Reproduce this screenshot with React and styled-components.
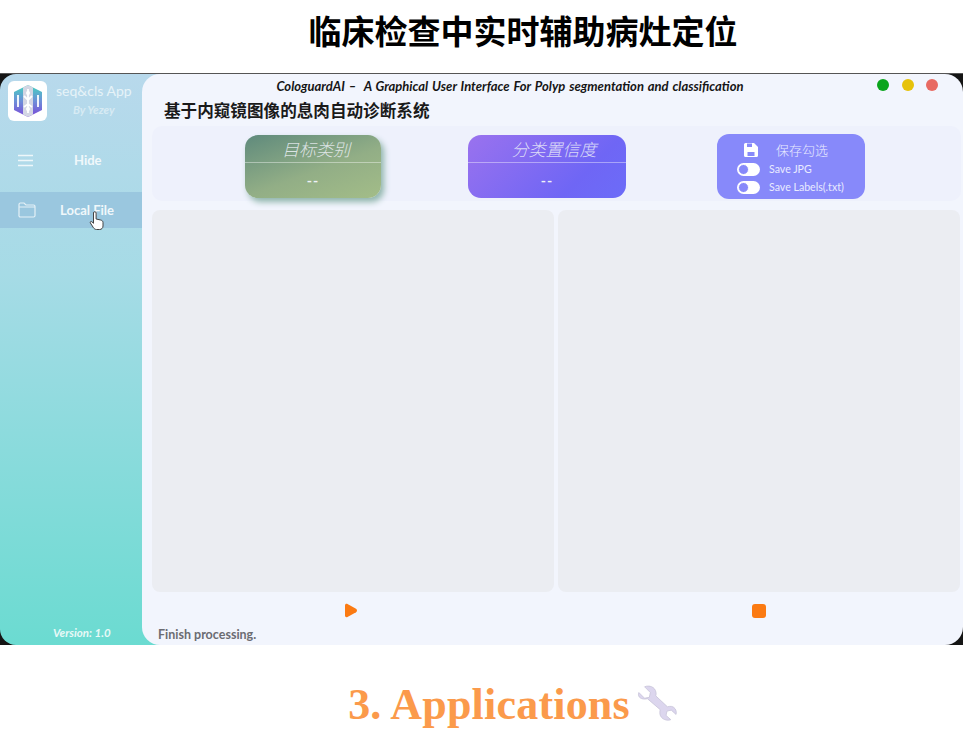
import React from 'react';
import styled, { createGlobalStyle } from 'styled-components';

const Global = createGlobalStyle`
  html, body { margin: 0; padding: 0; background: #fff; }
  body { width: 963px; height: 754px; overflow: hidden; font-family: "Lato", "Noto Sans CJK SC", sans-serif; }
`;
const Page = styled.div`display: flex; flex-direction: column; width: 963px; height: 754px;`;
const Heading = styled.h1`
  margin: 0; height: 73px; box-sizing: border-box; padding: 9px 0 0 83px; text-align: center;
  font: 700 33px/42px "Noto Sans CJK SC", sans-serif; color: #000;
`;
const Win = styled.div`
  display: flex; height: 572px; background: #151515; border-top: 1px solid #555; box-sizing: border-box;
`;
const Side = styled.aside`
  width: 162px; margin-right: -20px; padding-right: 20px; box-sizing: border-box; flex: none;
  display: flex; flex-direction: column; border-radius: 16px 0 0 16px;
  background: linear-gradient(180deg, #b8d9ec 0%, #a6dbe6 35%, #6bdbd1 100%);
`;
const Brand = styled.div`display: flex; padding: 7px 0 0 8px; height: 68px; box-sizing: border-box;`;
const LogoBox = styled.div`
  width: 39px; height: 40px; border-radius: 6px; background: #fff; display: flex; align-items: center; justify-content: center;
`;
const BrandText = styled.div`
  display: flex; flex-direction: column; align-items: center; margin-left: 9px; color: #e6f3f8;
`;
const AppName = styled.div`font-size: 14px; line-height: 19px;`;
const By = styled.div`font-size: 11.5px; line-height: 20px; font-style: italic; font-weight: 700; opacity: .7;`;
const NavItem = styled.div`
  display: flex; align-items: center; height: 36px; position: relative; color: #f0f8fb;
  font-size: 13px; font-weight: 700; box-sizing: border-box; padding-left: ${p => p.$pad}px;
  background: ${p => p.$active ? '#9ac7df' : 'transparent'};
  margin-bottom: 14px;
`;
const NavLabel = styled.span`margin-left: ${p => p.$gap}px;`;
const Cursor = styled.svg`position: absolute; left: 89px; top: 19px;`;
const Version = styled.div`
  margin-top: auto; padding: 0 0 5px 53px; font-size: 11.5px; line-height: 14px; font-weight: 700; font-style: italic; color: #e8f9f7;
`;
const Main = styled.main`
  flex: 1; min-width: 0; position: relative; border-radius: 18px; background: #f2f5fd;
  display: flex; flex-direction: column; padding: 0 2px 0 10px;
`;
const Bar = styled.div`
  height: 26px; box-sizing: border-box; position: relative; display: flex; align-items: center; justify-content: center; padding: 0 93px 2px 0;
  font-size: 13px; font-weight: 700; font-style: italic; color: #161616; word-spacing: 1px;
`;
const Lights = styled.div`position: absolute; right: 23px; top: 5px; display: flex; gap: 12.5px;`;
const Light = styled.span`width: 12px; height: 12px; border-radius: 50%; background: ${p => p.$c};`;
const Sub = styled.div`
  height: 26px; padding-left: 12px; font: 700 16.6px/20px "Noto Sans CJK SC", sans-serif; color: #1a1a1a;
`;
const Cards = styled.section`
  height: 75px; border-radius: 10px; background: #eef1fc; display: grid;
  grid-template-columns: 93px 136px 87px 158px 91px 148px 1fr; align-items: start; padding-top: 9px; box-sizing: border-box;
`;
const Card = styled.div`
  grid-column: ${p => p.$col}; height: ${p => p.$h}px; border-radius: 13px; color: #eef1f8;
  background: ${p => p.$bg}; box-shadow: ${p => p.$shadow || 'none'};
  display: flex; flex-direction: column; align-items: center;
`;
const CardTitle = styled.div`
  align-self: stretch; height: 27px; border-bottom: 1px solid rgba(255,255,255,.4); text-align: center; text-indent: ${p => p.$indent}px;
  font: italic 300 17px/28px "Noto Sans CJK SC", serif; color: rgba(238,241,248,.85);
`;
const CardValue = styled.div`font-size: 14px; font-weight: 700; line-height: 35px; letter-spacing: 1px;`;
const SaveCard = styled.div`
  grid-column: 6; height: 65px; width: 148px; border-radius: 12px; background: #8789fa; color: #e9ebff;
  display: flex; flex-direction: column; padding: 6px 0 0 20px; box-sizing: border-box; margin-top: -1px;
`;
const SaveHead = styled.div`display: flex; align-items: center; gap: 17px; padding-left: 6px; height: 20px; font: 300 13px/20px "Noto Sans CJK SC", serif;`;
const SaveRow = styled.div`display: flex; align-items: center; gap: 9px; height: 18px; font-size: 10.6px;`;
const Toggle = styled.span`
  width: 23px; height: 13px; border-radius: 7px; background: #fff; position: relative; display: block;
`;
const Knob = styled.span`
  position: absolute; left: 1px; top: 1px; width: 11px; height: 11px; border-radius: 50%; background: #8789fa; border: 1px solid #fff; box-sizing: border-box;
`;
const Panes = styled.section`
  display: grid; grid-template-columns: 402px 402px; gap: 4px; margin-top: 9px; height: 382px;
`;
const Pane = styled.div`background: #ebedf2; border-radius: 8px;`;
const Controls = styled.div`
  display: flex; gap: 394px; height: 38px; padding: 0 0 1px 192px; box-sizing: border-box; align-items: center;
`;
const Status = styled.div`font-size: 12.5px; font-weight: 700; color: #6b6c72; line-height: 14px; padding: 0 0 0 6px; margin-top: -2px;`;
const Foot = styled.div`
  flex: 1; display: flex; align-items: flex-start; justify-content: center; gap: 6px; padding: 37px 0 0 62px;
`;
const FootTitle = styled.h2`
  margin: 0; font: 700 44px/46px "Liberation Serif", serif; letter-spacing: .2px; color: #fb9a4b;
`;

const Logo = () => (
  <svg width="32" height="34" viewBox="0 0 32 34" fill="none">
    <defs>
      <linearGradient id="lg" x1="0" y1="0" x2="0" y2="1">
        <stop offset="0" stopColor="#45d3bf" />
        <stop offset=".5" stopColor="#6d8fd8" />
        <stop offset="1" stopColor="#7a48d8" />
      </linearGradient>
    </defs>
    <path d="M16 1 30 8v18l-14 7-14-7V8z" fill="url(#lg)" />
    <path d="M11 3.500 16 1l5 2.500v27L16 33l-5-2.500z" fill="#d3d6e4" />
    <path d="M16 5v24M12 12l4 4 4-4M12 23l4-3 4 3M6 11v12M26 11v12" stroke="#fff" strokeWidth="1.800" />
    <circle cx="16" cy="9" r="2" fill="#fff" /><circle cx="16" cy="25" r="2" fill="#fff" />
  </svg>
);
const Menu = () => (
  <svg width="15" height="13" viewBox="0 0 15 13"><path d="M0 1.500h15M0 6.500h15M0 11.500h15" stroke="#eef7fa" strokeWidth="1.600" /></svg>
);
const Folder = () => (
  <svg width="18" height="16" viewBox="0 0 18 16" fill="none" stroke="#e4f1f7" strokeWidth="1.200">
    <path d="M1 13V2.500A1.500 1.500 0 0 1 2.500 1h3.500l2 2h7.500A1.500 1.500 0 0 1 17 4.500v9a1.500 1.500 0 0 1-1.500 1.500h-13A1.500 1.500 0 0 1 1 13zM1 5h16" />
  </svg>
);
const Hand = () => (
  <Cursor width="16" height="20" viewBox="0 0 16 20">
    <path d="M4.500 2a1.300 1.300 0 0 1 2.600 0v6l4.500 1c1.600.4 2.400 1.200 2.400 2.600V15c0 2-1.400 3.500-3.400 3.500H7.500c-1.300 0-2.200-.6-3-1.700L1.400 12c-.6-1 .5-2 1.500-1.200l1.600 1.500z" fill="#fff" stroke="#444" strokeWidth="1" />
  </Cursor>
);
const Disk = () => (
  <svg width="16" height="16" viewBox="0 0 16 16"><path d="M1 2.500A1.500 1.500 0 0 1 2.500 1h8.500L15 5v8.500a1.500 1.500 0 0 1-1.500 1.500h-11A1.500 1.500 0 0 1 1 13.500z" fill="#fff" /><path d="M4 1.500h5V5H4zM4.500 10h7v4h-7z" fill="#8789fa" /></svg>
);
const Play = () => (
  <svg width="14" height="15" viewBox="0 0 14 15"><path d="M1 2.500c0-1.500 1.300-2 2.500-1.400l8.500 4.700c1.300.8 1.300 2.600 0 3.400l-8.500 4.700C2.300 14.500 1 14 1 12.500z" fill="#fb7a12" /></svg>
);
const Stop = () => (
  <svg width="14" height="14" viewBox="0 0 14 14"><rect width="14" height="14" rx="3" fill="#fb7a12" /></svg>
);
const Wrench = () => (
  <svg width="41" height="40" viewBox="0 0 43 40" style={{ marginTop: 1 }}>
    <path d="M3 9 9 15l5-1 1-5-6-6c5-2 11 0 12 6 .3 1.500 0 2.500-.3 3.500L33 24c3-1 6-.7 8 2 1.300 2 1.500 4 1 6l-5-4.500-4.500 1-1 4.500 5 4.500c-6 2-12-2-11.500-8 0-1 .2-1.700.4-2.500L12 15.500C6 17 1 14 3 9z" fill="#dcd6ee" stroke="#c6c2d8" strokeWidth=".8" />
  </svg>
);

export default function App() {
  return (
    <Page>
      <Global />
      <Heading>临床检查中实时辅助病灶定位</Heading>
      <Win>
        <Side>
          <Brand>
            <LogoBox><Logo /></LogoBox>
            <BrandText>
              <AppName>seq&amp;cls App</AppName>
              <By>By Yezey</By>
            </BrandText>
          </Brand>
          <NavItem $pad={18}><Menu /><NavLabel $gap={41}>Hide</NavLabel></NavItem>
          <NavItem $pad={18} $active><Folder /><NavLabel $gap={24}>Local File</NavLabel><Hand /></NavItem>
          <Version>Version: 1.0</Version>
        </Side>
        <Main>
          <Bar>
            CologuardAI – &nbsp;A Graphical User Interface For Polyp segmentation and classification
            <Lights><Light $c="#0aa51c" /><Light $c="#e6c20a" /><Light $c="#e86a62" /></Lights>
          </Bar>
          <Sub>基于内窥镜图像的息肉自动诊断系统</Sub>
          <Cards>
            <Card $col={2} $h={63} $bg="linear-gradient(160deg,#5f8a7c 0%,#92ae86 55%,#a3bd88 100%)" $shadow="3px 4px 6px #8fb5ab">
              <CardTitle $indent={6}>目标类别</CardTitle>
              <CardValue>--</CardValue>
            </Card>
            <Card $col={4} $h={63} $bg="linear-gradient(135deg,#9a72ee 0%,#6f66f5 70%,#6c6cf8 100%)">
              <CardTitle $indent={14}>分类置信度</CardTitle>
              <CardValue>--</CardValue>
            </Card>
            <SaveCard>
              <SaveHead><Disk />保存勾选</SaveHead>
              <SaveRow><Toggle><Knob /></Toggle>Save JPG</SaveRow>
              <SaveRow><Toggle><Knob /></Toggle>Save Labels(.txt)</SaveRow>
            </SaveCard>
          </Cards>
          <Panes><Pane /><Pane /></Panes>
          <Controls><Play /><Stop /></Controls>
          <Status>Finish processing.</Status>
        </Main>
      </Win>
      <Foot>
        <FootTitle>3. Applications</FootTitle>
        <Wrench />
      </Foot>
    </Page>
  );
}
